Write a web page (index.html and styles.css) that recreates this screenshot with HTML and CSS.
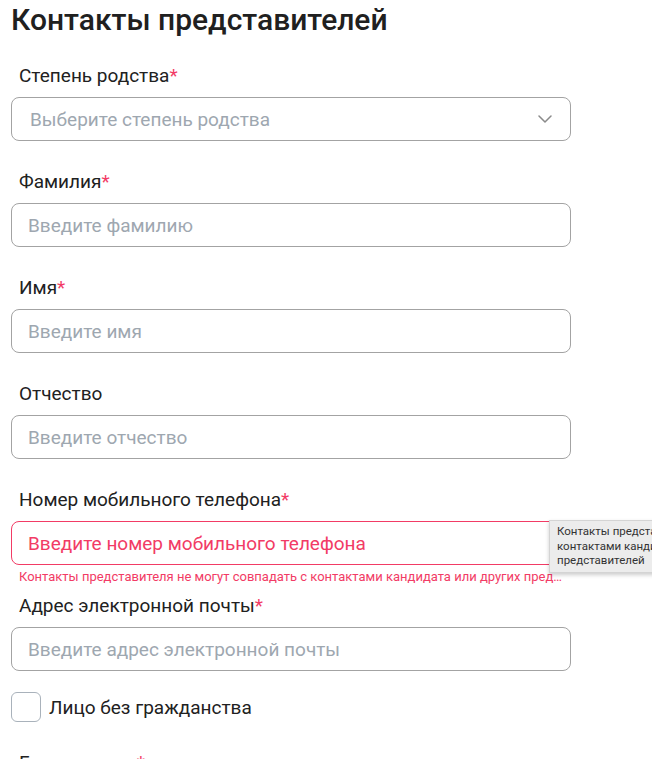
FILE: index.html
```html
<!DOCTYPE html>
<html lang="ru">
<head>
    <meta charset="UTF-8">
    <meta name="viewport" content="width=device-width, initial-scale=1.0">
    <title>Контакты представителей</title>
    <link rel="stylesheet" href="styles.css">
</head>
<body>
    <div class="page">
        <h1 class="title">Контакты представителей</h1>

        <form class="form">
            <div class="field">
                <label class="label">Степень родства<span class="req">*</span></label>
                <div class="select">
                    <span class="placeholder">Выберите степень родства</span>
                    <svg class="chevron" width="14" height="8" viewBox="0 0 14 8">
                        <path d="M1 1 L7 7 L13 1" fill="none" stroke="#8a8a8a" stroke-width="1.5" stroke-linecap="round" stroke-linejoin="round"/>
                    </svg>
                </div>
            </div>

            <div class="field">
                <label class="label">Фамилия<span class="req">*</span></label>
                <input class="input" type="text" placeholder="Введите фамилию">
            </div>

            <div class="field">
                <label class="label">Имя<span class="req">*</span></label>
                <input class="input" type="text" placeholder="Введите имя">
            </div>

            <div class="field">
                <label class="label">Отчество</label>
                <input class="input" type="text" placeholder="Введите отчество">
            </div>

            <div class="field field-error">
                <label class="label">Номер мобильного телефона<span class="req">*</span></label>
                <input class="input input-error" type="tel" placeholder="Введите номер мобильного телефона">
                <div class="error">Контакты представителя не могут совпадать с контактами кандидата или других представителей</div>
            </div>

            <div class="field field-tight">
                <label class="label">Адрес электронной почты<span class="req">*</span></label>
                <input class="input" type="email" placeholder="Введите адрес электронной почты">
            </div>

            <label class="check-row">
                <span class="checkbox"></span>
                <span class="check-label">Лицо без гражданства</span>
            </label>

            <div class="field">
                <label class="label">Гражданство<span class="req">*</span></label>
            </div>
        </form>

        <div class="tooltip">
            Контакты представителя не могут совпадать с<br>
            контактами кандидата или других<br>
            представителей
        </div>
    </div>
</body>
</html>
```

FILE: styles.css
```css
:root {
    --text-color: #212121;
    --placeholder-color: #9ea7b0;
    --border-color: #a3a3a3;
    --error-color: #f23b65;
}

body, html {
    margin: 0;
    padding: 0;
    font-family: Roboto, 'Liberation Sans', sans-serif;
    background-color: #ffffff;
    color: var(--text-color);
    overflow: hidden;
}

.page {
    position: relative;
    padding-left: 11px;
}

.title {
    margin: 0;
    font-size: 30px;
    font-weight: 500;
    line-height: 40px;
    color: #202020;
}

.form {
    display: flex;
    flex-direction: column;
    padding-top: 24px;
}

.field {
    display: flex;
    flex-direction: column;
    margin-bottom: 29px;
}

.field-error {
    margin-bottom: 9px;
}

.field-tight {
    margin-bottom: 21px;
}

.label {
    padding-left: 8px;
    font-size: 19px;
    line-height: 24px;
    margin-bottom: 9px;
}

.req {
    color: var(--error-color);
}

.input,
.select {
    box-sizing: border-box;
    width: 560px;
    height: 44px;
    border: 1px solid var(--border-color);
    border-radius: 8px;
    font-family: inherit;
    font-size: 19px;
    color: var(--text-color);
    background: #fff;
    outline: none;
}

.input {
    padding: 0 16px;
}

.input::placeholder {
    color: var(--placeholder-color);
}

.select {
    display: flex;
    align-items: center;
    justify-content: space-between;
    padding: 0 18px;
}

.placeholder {
    color: var(--placeholder-color);
}

.input-error {
    border-color: var(--error-color);
}

.input-error::placeholder {
    color: var(--error-color);
}

.error {
    box-sizing: border-box;
    width: 560px;
    padding: 0 8px;
    margin-top: 4px;
    font-size: 13px;
    line-height: 16px;
    color: var(--error-color);
    white-space: nowrap;
    overflow: hidden;
    text-overflow: ellipsis;
}

.check-row {
    display: flex;
    align-items: center;
    gap: 8px;
    margin-bottom: 29px;
}

.checkbox {
    box-sizing: border-box;
    width: 30px;
    height: 30px;
    border: 1px solid #a9b2bb;
    border-radius: 6px;
}

.check-label {
    font-size: 19px;
}

.tooltip {
    position: absolute;
    left: 549px;
    top: 520px;
    padding: 3px 7px 4px;
    background: #ececec;
    border: 1px solid #d4d4d4;
    box-shadow: 0 2px 4px rgba(0,0,0,0.2);
    font-size: 11.5px;
    line-height: 14.5px;
    color: #333;
    white-space: nowrap;
}
```
